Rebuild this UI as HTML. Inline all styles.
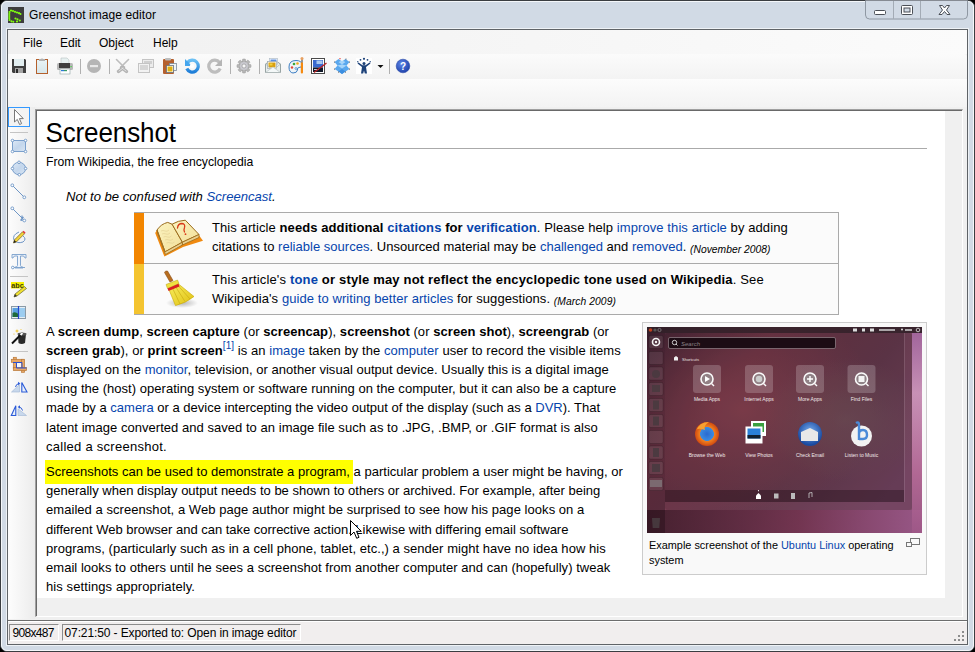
<!DOCTYPE html>
<html><head><meta charset="utf-8">
<style>
*{box-sizing:border-box;margin:0;padding:0}
html,body{width:975px;height:652px;overflow:hidden;background:#000;font-family:"Liberation Sans",sans-serif}
.abs{position:absolute}
#frame{position:absolute;left:0;top:0;width:975px;height:652px;background:#d1dae5;border:1px solid #3a3d41;border-radius:7px}
#frame:before{content:"";position:absolute;left:0;top:0;right:0;bottom:0;border:1px solid #f4f7fa;border-radius:6px}
#title{left:29px;top:8px;font-size:12px;letter-spacing:0.07px;color:#000;white-space:nowrap}
#client{left:7px;top:29px;width:961px;height:616px;border:1px solid #5f6367;background:#f0f0f0;box-shadow:0 0 0 1px #eef2f6}
#menubar{left:8px;top:30px;width:959px;height:24px;background:linear-gradient(90deg,#f0f0f0,#fbfbfb)}
.mi{position:absolute;top:6px;font-size:12px;color:#000}
#toolbar{left:8px;top:54px;width:959px;height:25px;background:linear-gradient(#fbfbfb,#f3f3f3);border-radius:0 3px 3px 0}
#toolbar2{left:8px;top:79px;width:959px;height:28px;background:linear-gradient(#fcfcfc,#f3f3f3)}
#lefttb{left:8px;top:107px;width:27px;height:512px;background:linear-gradient(90deg,#fdfdfd,#ececec)}
#canvas{left:35px;top:109px;width:928px;height:508px;background:#f0f0f0;border-top:2px solid;border-left:2px solid;border-color:#a0a0a0 #fff #fff #a0a0a0;border-right:1px solid #fff;border-bottom:1px solid #fff}
#canvas:before{content:"";position:absolute;left:-1px;top:-1px;right:0;bottom:0;border-top:1px solid #696969;border-left:1px solid #696969}
#img{left:37px;top:111px;width:908px;height:487px;background:#fff;overflow:hidden}
#status{left:8px;top:620px;width:959px;height:24px;background:#f1eeee;border-top:1px solid #6d6d6d;box-shadow:inset 0 1px 0 #fff}
.sp{position:absolute;top:3px;height:17px;border:1px solid;border-color:#8c8c8c #fff #fff #8c8c8c;font-size:12px;line-height:14px;padding-top:1px;white-space:nowrap}

.t{position:absolute;white-space:nowrap;color:#000}
.t a{color:#0645ad;text-decoration:none}
.t b a{color:#0645ad}
.body{font-size:13px;line-height:19.2px}
sup{font-size:10px;line-height:0;vertical-align:baseline;position:relative;top:-6px}
.sm{font-size:10.3px;position:relative;top:1.5px}
#ambox{left:97px;top:101px;width:705px;height:103px;background:#fbfbfb;border:1px solid #aaa;border-left:0}
#thumb{left:605px;top:211px;width:285px;height:253px;background:#f9f9f9;border:1px solid #ccc}
#ubuntu{left:4px;top:4px;width:275px;height:206px;background:#5a2a40;overflow:hidden}
</style></head><body>
<div id="frame"></div>
<div class="abs" id="title">Greenshot image editor</div>
<div class="abs" id="client"></div>
<div class="abs" id="menubar">
  <span class="mi" style="left:15px">File</span>
  <span class="mi" style="left:52px">Edit</span>
  <span class="mi" style="left:91px">Object</span>
  <span class="mi" style="left:145px">Help</span>
</div>
<div class="abs" id="toolbar"></div>
<div class="abs" id="toolbar2"></div>
<div class="abs" id="lefttb"></div>
<div class="abs" id="canvas"></div>
<div class="abs" id="img">
 <div class="t" style="left:8.4px;top:4px;font-size:26px;line-height:36px;letter-spacing:-0.1px;transform:scaleY(1.06);transform-origin:0 26.5px">Screenshot</div>
 <div class="abs" style="left:9px;top:37px;width:881px;height:1px;background:#aaa"></div>
 <div class="t" style="left:9px;top:43px;font-size:12.2px;line-height:17px">From Wikipedia, the free encyclopedia</div>
 <div class="t" style="left:29px;top:76px;font-size:13.1px;line-height:19px"><i>Not to be confused with <a>Screencast</a>.</i></div>
 <div class="abs" id="ambox">
<svg class="abs" style="left:-1px;top:-1px" width="80" height="104" viewBox="133 211 80 104">
 <defs>
  <radialGradient id="bshadow" cx=".5" cy=".5" r=".5"><stop offset="0" stop-color="#000" stop-opacity=".28"/><stop offset="1" stop-color="#000" stop-opacity="0"/></radialGradient>
  <linearGradient id="bpage" x1="0" y1="0" x2="1" y2="1"><stop offset="0" stop-color="#fbf3c0"/><stop offset="1" stop-color="#f3e09a"/></linearGradient>
  <linearGradient id="bbr" x1="0" y1="0" x2="1" y2="1"><stop offset="0" stop-color="#f8ee60"/><stop offset="1" stop-color="#e0c010"/></linearGradient>
 </defs>
 <!-- book shadow -->
 <path d="M155.2 232 L164.4 255.6 L183 246 L203 239.8 L198 233 L182 240 L165 250 L157 229 Z" fill="#f08a10"/>
 <!-- left page block -->
 <path d="M157 229 Q161 223 167.7 221.4 L172.1 223.2 L182.4 241.2 L165.1 250.8 Z" fill="url(#bpage)" stroke="#9a6a1a" stroke-width="1"/>
 <path d="M157 229 L158 233 L165.5 253.5 L182.4 244 L182.4 241.2 L165.1 250.8 Z" fill="#e8d090" stroke="#9a6a1a" stroke-width=".8"/>
 <!-- right page block -->
 <path d="M172.1 223.2 Q178 219.5 185.3 219.2 L199 233.5 L182.4 241.2 Z" fill="url(#bpage)" stroke="#9a6a1a" stroke-width="1"/>
 <path d="M182.4 241.2 L199 233.5 L199 236.5 L182.4 244 Z" fill="#e8d090" stroke="#9a6a1a" stroke-width=".8"/>
 <g stroke="#e0cc90" stroke-width=".6" fill="none"><path d="M161 230 q2 -1 4 0 t4 -1"/><path d="M162 233 q2 -1 4 0 t4 -1"/><path d="M163.5 236 q2 -1 4 0 t4 -1"/><path d="M165 239 q2 -1 4 0 t4 -1"/><path d="M166.5 242 q2 -1 4 0 t4 -1"/></g>
 <path d="M177.5 227 Q178 222.5 182 222.5 Q185.5 223 184.5 226.5 Q183.5 229 184.5 231" fill="none" stroke="#d83a1a" stroke-width="1.3" stroke-linecap="round"/>
 <circle cx="185.5" cy="233.2" r=".9" fill="#d83a1a"/>
 <!-- broom -->
 <ellipse cx="182" cy="302" rx="16" ry="5" fill="url(#bshadow)"/>
 <path d="M168.5 287.5 L178.5 283 L194 295.5 Q186 302 175.5 304.6 Z" fill="url(#bbr)" stroke="#c8a800" stroke-width=".6"/>
 <g stroke="#c8a810" stroke-width=".6"><line x1="172" y1="286" x2="180" y2="303"/><line x1="175" y1="284.8" x2="185" y2="300.5"/><line x1="177.5" y1="284" x2="190" y2="298"/></g>
 <path d="M164.5 271.5 Q165 269.5 167.5 270 L173 279.5 L170 281 Z" fill="#b86e20" stroke="#8a4a10" stroke-width=".6"/>
 <path d="M166 283.5 L177.5 279 L179 282.5 L167.5 287.5 Z" fill="#f0e040" stroke="#b8a010" stroke-width=".5"/>
 <path d="M167.5 287.5 L178.5 282.8 L179.5 285.5 L168.5 290 Z" fill="#d82020"/>
</svg>

  <div class="abs" style="left:0;top:0;width:10px;height:51px;background:#f28500"></div>
  <div class="abs" style="left:0;top:51px;width:10px;height:50px;background:#f4c430"></div>
  <div class="abs" style="left:10px;top:50px;width:694px;height:1px;background:#aaa"></div>
  <div class="t" style="left:78px;top:5px;font-size:13px;line-height:19.4px"><span class="ln" style="letter-spacing:0.086px">This article <b>needs additional <a>citations</a> for <a>verification</a></b>. Please help <a>improve this article</a> by adding</span><br><span class="ln" style="letter-spacing:0.022px">citations to <a>reliable sources</a>. Unsourced material may be <a>challenged</a> and <a>removed</a>. <i class="sm">(November 2008)</i></span></div>
  <div class="t" style="left:78px;top:57px;font-size:13px;line-height:19.4px"><span class="ln" style="letter-spacing:0.168px">This article's <b><a>tone</a> or style may not reflect the encyclopedic tone used on Wikipedia</b>. See</span><br><span class="ln" style="letter-spacing:0.077px">Wikipedia's <a>guide to writing better articles</a> for suggestions. <i class="sm">(March 2009)</i></span></div>
 </div>
 <div class="abs" style="left:8px;top:349px;width:308px;height:24px;background:#ffff00"></div>
 <div class="t body" style="left:9px;top:210.5px"><span class="ln" style="letter-spacing:0.057px">A <b>screen dump</b>, <b>screen capture</b> (or <b>screencap</b>), <b>screenshot</b> (or <b>screen shot</b>), <b>screengrab</b> (or</span><br><span class="ln" style="letter-spacing:0.066px"><b>screen grab</b>), or <b>print screen</b><sup><a>[1]</a></sup> is an <a>image</a> taken by the <a>computer</a> user to record the visible items</span><br><span class="ln" style="letter-spacing:0.020px">displayed on the <a>monitor</a>, television, or another visual output device. Usually this is a digital image</span><br><span class="ln" style="letter-spacing:0.031px">using the (host) operating system or software running on the computer, but it can also be a capture</span><br><span class="ln" style="letter-spacing:-0.000px">made by a <a>camera</a> or a device intercepting the video output of the display (such as a <a>DVR</a>). That</span><br><span class="ln" style="letter-spacing:0.037px">latent image converted and saved to an image file such as to .JPG, .BMP, or .GIF format is also</span><br><span class="ln" style="letter-spacing:0.263px">called a screenshot.</span></div>
 <div class="t body" style="left:9px;top:351px"><span class="ln" style="letter-spacing:0.010px">Screenshots can be used to demonstrate a program, a particular problem a user might be having, or</span><br><span class="ln" style="letter-spacing:-0.000px">generally when display output needs to be shown to others or archived. For example, after being</span><br><span class="ln" style="letter-spacing:0.051px">emailed a screenshot, a Web page author might be surprised to see how his page looks on a</span><br><span class="ln" style="letter-spacing:-0.016px">different Web browser and can take corrective action. Likewise with differing email software</span><br><span class="ln" style="letter-spacing:0.041px">programs, (particularly such as in a cell phone, tablet, etc.,) a sender might have no idea how his</span><br><span class="ln" style="letter-spacing:0.037px">email looks to others until he sees a screenshot from another computer and can (hopefully) tweak</span><br><span class="ln" style="letter-spacing:0.096px">his settings appropriately.</span></div>
 <div class="abs" id="thumb">
  <div class="abs" id="ubuntu"><svg width="275" height="206" viewBox="0 0 275 206" style="display:block">
 <defs>
  <linearGradient id="ubg" x1="0" y1="0" x2="1" y2="0.6">
   <stop offset="0" stop-color="#48283a"/><stop offset=".35" stop-color="#7a3c50"/><stop offset=".7" stop-color="#74445a"/><stop offset="1" stop-color="#845070"/>
  </linearGradient>
  <radialGradient id="ured" cx=".35" cy=".4" r=".5"><stop offset="0" stop-color="#a85262" stop-opacity=".75"/><stop offset="1" stop-color="#a05060" stop-opacity="0"/></radialGradient>
  <radialGradient id="ugray" cx=".72" cy=".45" r=".3"><stop offset="0" stop-color="#8a6a70" stop-opacity=".55"/><stop offset="1" stop-color="#8a6a70" stop-opacity="0"/></radialGradient>
  <linearGradient id="ubot" x1="0" y1="0" x2="1" y2="0"><stop offset="0" stop-color="#301420"/><stop offset=".55" stop-color="#6e2c48"/><stop offset="1" stop-color="#a05a90"/></linearGradient>
  <linearGradient id="upink" x1="0" y1="0" x2="0" y2="1"><stop offset="0" stop-color="#b070b0"/><stop offset=".3" stop-color="#e0a8d0"/><stop offset=".7" stop-color="#c070a0"/><stop offset="1" stop-color="#a05888"/></linearGradient>
  <radialGradient id="uff" cx=".5" cy=".5" r=".5"><stop offset="0" stop-color="#2a6ad0"/><stop offset=".55" stop-color="#3a8ae0"/><stop offset=".6" stop-color="#f08020"/><stop offset="1" stop-color="#d04a10"/></radialGradient>
  <radialGradient id="utb" cx=".5" cy=".4" r=".55"><stop offset="0" stop-color="#7ab0f0"/><stop offset="1" stop-color="#1a4aa0"/></radialGradient>
 </defs>
 <rect width="275" height="206" fill="url(#ubg)"/>
 <rect width="275" height="206" fill="url(#ured)"/>
 <rect width="275" height="206" fill="url(#ugray)"/>
 <rect x="0" y="183" width="275" height="23" fill="url(#ubot)" opacity=".7"/>
 <rect x="265" y="6" width="10" height="200" fill="url(#upink)" opacity=".75"/>
 <!-- top panel -->
 <rect x="0" y="0" width="275" height="6" fill="#2e1e26" opacity=".85"/>
 <circle cx="3.5" cy="3" r="1.8" fill="#c04020"/><circle cx="8" cy="3" r="1.6" fill="#555"/><circle cx="12.5" cy="3" r="1.6" fill="none" stroke="#999" stroke-width=".6"/>
 <g fill="#ddd"><rect x="206" y="1.5" width="4" height="3"/><rect x="215" y="1.5" width="3" height="3"/><rect x="223" y="1.5" width="4" height="3"/><rect x="232" y="2" width="16" height="2" opacity=".7"/><circle cx="255" cy="2.5" r="1"/><rect x="258" y="2" width="7" height="2" opacity=".7"/><circle cx="271" cy="3" r="1.8" fill="none" stroke="#ddd" stroke-width=".8"/></g>
 <!-- outer dash frame -->
 <rect x="18" y="6" width="247" height="177" rx="3" fill="#1a0810" opacity=".14"/>
 <rect x="18" y="6" width="239" height="169" fill="#000" opacity=".12"/>
 <line x1="257.5" y1="6" x2="257.5" y2="175" stroke="#fff" stroke-opacity=".12"/>
 <!-- launcher -->
 <rect x="0" y="6" width="18" height="200" fill="#1a0a12" opacity=".35"/>
 <g fill="#fff" fill-opacity=".09" stroke="#000" stroke-opacity=".3" stroke-width=".5">
  <rect x="2" y="8.5" width="14" height="13" rx="1.5"/><rect x="2" y="24.5" width="14" height="13" rx="1.5"/><rect x="2" y="40" width="14" height="13" rx="1.5"/><rect x="2" y="55.5" width="14" height="13" rx="1.5"/><rect x="2" y="71.5" width="14" height="13" rx="1.5"/><rect x="2" y="87.5" width="14" height="13" rx="1.5"/><rect x="2" y="103.5" width="14" height="13" rx="1.5"/><rect x="2" y="119" width="14" height="13" rx="1.5"/><rect x="2" y="134.5" width="14" height="13" rx="1.5"/><rect x="2" y="150.5" width="14" height="13" rx="1.5"/>
 </g>
 <circle cx="9" cy="15" r="3.5" fill="none" stroke="#f4f4f4" stroke-width="1.6"/><circle cx="9" cy="15" r="1.2" fill="#f4f4f4"/>
 <g fill="#4a3a40" opacity=".9"><circle cx="9" cy="47" r="4"/><rect x="5" y="58" width="8" height="7"/><rect x="6" y="73.5" width="6" height="9"/><rect x="6" y="89.5" width="6" height="9"/><rect x="6" y="121" width="6" height="9"/><rect x="5" y="137" width="8" height="8"/></g>
 <rect x="3" y="153" width="12" height="7" fill="#888" opacity=".6"/>
 <path d="M5 191 H13 L12.3 201 H5.7 Z" fill="#4a4044" opacity=".8"/>
 <!-- search -->
 <rect x="21.5" y="10.5" width="167" height="11" rx="1.5" fill="#1c0c14" stroke="#8a7880" stroke-width=".8"/>
 <circle cx="27.5" cy="15.5" r="2.2" fill="none" stroke="#ddd" stroke-width=".9"/><line x1="29" y1="17" x2="30.5" y2="18.5" stroke="#ddd" stroke-width=".9"/>
 <text x="34" y="18.5" font-family="Liberation Sans" font-style="italic" font-size="6" fill="#8a8084">Search</text>
 <text x="35" y="33.5" font-family="Liberation Sans" font-size="4" fill="#e8e0e0">Shortcuts</text>
 <path d="M27 33.5 V30.5 L29 29 L31 30.5 V33.5 Z" fill="#f0f0f0"/>
 <!-- tiles -->
 <g fill="#fff" fill-opacity=".2"><rect x="46" y="38" width="28" height="28" rx="3"/><rect x="98" y="38" width="28" height="28" rx="3"/><rect x="149" y="38" width="28" height="28" rx="3"/><rect x="200.5" y="38" width="28" height="28" rx="3"/></g>
 <g fill="#999" fill-opacity=".6" stroke="#fafafa" stroke-width="1.6"><circle cx="60" cy="52" r="6"/><circle cx="112" cy="52" r="6"/><circle cx="163" cy="52" r="6"/><circle cx="214.5" cy="52" r="6"/></g>
 <g stroke="#fafafa" stroke-width="1.4"><line x1="64.5" y1="56.5" x2="67" y2="59"/><line x1="116.5" y1="56.5" x2="119" y2="59"/><line x1="167.5" y1="56.5" x2="170" y2="59"/><line x1="219" y1="56.5" x2="221.5" y2="59"/></g>
 <path d="M58 49 L63 52 L58 55 Z" fill="#fff"/>
 <circle cx="112" cy="52" r="3.2" fill="#ccc"/>
 <path d="M160 52 H166 M163 49 V55" stroke="#fff" stroke-width="1.4"/>
 <rect x="211.5" y="49" width="6" height="6" fill="#f4f4f4"/>
 <g font-family="Liberation Sans" font-size="5" fill="#f0e8ea" text-anchor="middle"><text x="60" y="74">Media Apps</text><text x="112" y="74">Internet Apps</text><text x="163" y="74">More Apps</text><text x="214.5" y="74">Find Files</text>
 <text x="60" y="130">Browse the Web</text><text x="112" y="130">View Photos</text><text x="163" y="130">Check Email</text><text x="214.5" y="130">Listen to Music</text></g>
 <!-- row 2 icons -->
 <circle cx="60" cy="107" r="12" fill="url(#uff)"/>
 <path d="M49 104 Q52 95 62 95 Q56 99 58 103 Q50 100 49 104 Z" fill="#f8a030"/>
 <g><rect x="104" y="94" width="15" height="15" fill="#fff" transform="rotate(0)"/><rect x="106" y="96" width="11" height="9" fill="#3aa040"/><rect x="98.5" y="99.5" width="17" height="17" fill="#fff"/><rect x="100.5" y="101.5" width="13" height="10" fill="#2a80d8"/><rect x="100.5" y="108" width="13" height="3.5" fill="#102030"/></g>
 <circle cx="163" cy="107" r="12" fill="url(#utb)"/>
 <path d="M154 105 L163 101 L171 105 V114 H154 Z" fill="#e8e8e8"/>
 <circle cx="214.5" cy="109" r="10.5" fill="#f2f2f2"/>
 <path d="M209 96 Q212 94 212 98 V113 M212 107 Q212 103 216 103 Q220 103 220 108 Q220 112 216 112 H212" fill="none" stroke="#4a8ad8" stroke-width="2.4"/>
 <!-- lens bar -->
 <rect x="18" y="163" width="239" height="12" fill="#1a0a12" opacity=".35"/>
 <path d="M109 172 V168.5 L111.5 166 L114 168.5 V172 Z" fill="#fff"/><circle cx="111.5" cy="163.7" r=".6" fill="#fff"/>
 <g fill="#bbb"><rect x="127" y="166.5" width="4.5" height="5"/><rect x="144" y="166" width="4" height="6"/><path d="M162 166 V171 M162 166 L165 165.5 V170" stroke="#ccc" stroke-width=".8" fill="none"/></g>
</svg>
</div>
  <div class="t" style="left:6px;top:215px;font-size:10.9px;line-height:14.6px">Example screenshot of the <a>Ubuntu Linux</a> operating<br>system</div>
  <svg class="abs" style="left:262px;top:214px" width="16" height="12" viewBox="0 0 16 12"><rect x="5.5" y="1.5" width="9" height="6" fill="none" stroke="#777"/><rect x="1.5" y="5.5" width="5" height="4" fill="#f9f9f9" stroke="#777"/></svg>
 </div>
</div>
<svg class="abs" style="left:349px;top:519px" width="14" height="21" viewBox="0 0 14 21"><path d="M1.5 1.5 V16.5 L5 13 L7.7 19.3 L10 18.3 L7.5 12.3 H12.3 Z" fill="#fff" stroke="#000" stroke-width="1" stroke-linejoin="miter"/></svg>

<svg class="abs" style="left:0;top:0" width="975" height="110" viewBox="0 0 975 110">
 <defs>
  <linearGradient id="gBlueC" x1="0" y1="0" x2="0" y2="1"><stop offset="0" stop-color="#eaf4f6"/><stop offset="1" stop-color="#d6e6ea"/></linearGradient>
  <linearGradient id="gGray" x1="0" y1="0" x2="0" y2="1"><stop offset="0" stop-color="#c8c8c8"/><stop offset="1" stop-color="#a6a6a6"/></linearGradient>
  <radialGradient id="gHelp" cx="0.4" cy="0.35" r="0.7"><stop offset="0" stop-color="#5e86e8"/><stop offset="1" stop-color="#1c3fa8"/></radialGradient>
  <linearGradient id="gUndo" x1="0" y1="0" x2="0" y2="1"><stop offset="0" stop-color="#6cc0f4"/><stop offset="1" stop-color="#1e7ed8"/></linearGradient>
 </defs>
 <!-- title icon -->
 <rect x="8" y="7" width="16" height="16" fill="#3d3d3d"/>
 <g fill="#80ff10">
  <circle cx="11" cy="10.5" r="1.1"/><circle cx="13" cy="11" r="1.1"/><circle cx="15" cy="11.8" r="1.1"/><circle cx="17" cy="12.5" r="1.1"/><circle cx="19" cy="13.2" r="1.1"/><circle cx="20.5" cy="14" r="1"/>
  <circle cx="9.5" cy="12" r="1.1"/><circle cx="9.3" cy="14" r="1.1"/><circle cx="9.3" cy="16" r="1.1"/><circle cx="9.3" cy="18" r="1.1"/><circle cx="9.5" cy="20" r="1.1"/><circle cx="11.5" cy="21.3" r="1.1"/><circle cx="13.3" cy="21.8" r="1"/>
  <circle cx="15.5" cy="18.5" r="1.1"/><circle cx="17.5" cy="19.3" r="1.1"/><circle cx="19.8" cy="20.5" r="1.1"/><circle cx="17" cy="21.5" r="1.1"/>
 </g>
 <!-- caption buttons -->
 <path d="M865.5 0.5 V15 a4 4 0 0 0 4 4 H963.5 a4 4 0 0 0 4 -4 V0.5" fill="#d1dae5" stroke="#8f98a3"/>
 <line x1="893.5" y1="1" x2="893.5" y2="19" stroke="#a3abb5"/>
 <line x1="920.5" y1="1" x2="920.5" y2="19" stroke="#a3abb5"/>
 <rect x="874.5" y="10.5" width="11" height="4" rx="1" fill="#fff" stroke="#4a4f56"/>
 <rect x="901.5" y="5.5" width="11" height="9" rx="1" fill="#fff" stroke="#4a4f56"/>
 <rect x="904" y="8" width="6" height="4" fill="#d1dae5" stroke="#4a4f56" stroke-width="1"/>
 <path d="M939.5 5.5 L942.5 5.5 L944.5 8 L946.5 5.5 L949.5 5.5 L946.5 10 L950 14.5 L947 14.5 L944.5 11.5 L942 14.5 L939 14.5 L942.5 10 Z" fill="#fff" stroke="#4a4f56" stroke-linejoin="round"/>
 <!-- save -->
 <path d="M12 59 H25 L26 60 V73 H13 L12 72 Z" fill="#3f3f3f"/>
 <rect x="14" y="59" width="10" height="7" fill="#e2eef0"/>
 <rect x="15" y="68" width="8" height="5" fill="#a5a5a5"/>
 <rect x="16" y="69" width="2" height="4" fill="#2a2a2a"/>
 <!-- clipboard -->
 <rect x="36.5" y="59.5" width="11" height="14" fill="url(#gBlueC)" stroke="#b4602c"/>
 <path d="M39 60 Q42 57 45 60 Z" fill="#a9a9a9"/>
 <rect x="39" y="59" width="6" height="2" fill="#b3b3b3"/>
 <!-- printer -->
 <path d="M61 58 H67 L69 60 V64 H61 Z" fill="#e6f0f0" stroke="#b9c4c4" stroke-width=".6"/>
 <rect x="57" y="63" width="16" height="7" rx="1.5" fill="#b8b8b8"/>
 <rect x="59" y="63" width="11" height="5" fill="#3e3e3e"/>
 <rect x="70.5" y="66" width="1.2" height="1.2" fill="#3fd33f"/>
 <rect x="60" y="69" width="10" height="5" fill="#fff" stroke="#8aa0a0" stroke-width=".6"/>
 <rect x="61" y="70" width="3" height="1.2" fill="#2d7ad6"/><rect x="64" y="70" width="3" height="1.2" fill="#3a9a6a"/>
 <!-- separators -->
 <g stroke="#b0b0b0"><line x1="80.5" y1="59" x2="80.5" y2="74"/><line x1="109.5" y1="59" x2="109.5" y2="74"/><line x1="230.5" y1="59" x2="230.5" y2="74"/><line x1="259.5" y1="59" x2="259.5" y2="74"/><line x1="389.5" y1="59" x2="389.5" y2="74"/></g>
 <!-- delete -->
 <circle cx="94" cy="66" r="7" fill="#b5b5b5"/>
 <rect x="90" y="65" width="8" height="2.2" fill="#e8e8e8"/>
 <!-- cut -->
 <g stroke="#bdbdbd" stroke-width="1.6" stroke-linecap="round"><line x1="116.5" y1="59.5" x2="123" y2="66"/><line x1="128.5" y1="59.5" x2="122" y2="66"/></g>
 <g stroke="#b3b3b3" stroke-width="3.4" stroke-linecap="round"><line x1="121.5" y1="67.5" x2="126.5" y2="71.5"/><line x1="123.5" y1="67.5" x2="118.5" y2="71.5"/></g>
 <g stroke="#e6e6e6" stroke-width=".9" stroke-linecap="round"><line x1="122" y1="68" x2="126" y2="71"/><line x1="123" y1="68" x2="119" y2="71"/></g>
 <!-- copy -->
 <rect x="142.5" y="59.5" width="11" height="8" fill="#ececec" stroke="#c4c4c4"/>
 <rect x="144" y="61" width="8" height="3" fill="#d0d0d0"/>
 <rect x="138.5" y="63.5" width="11" height="9" fill="#f2f2f2" stroke="#c4c4c4"/>
 <rect x="140" y="65" width="8" height="5" fill="#d6d6d6"/>
 <!-- paste -->
 <rect x="163" y="59" width="11" height="15" rx="1" fill="#b5602e"/>
 <rect x="165" y="58" width="6" height="2.5" rx="1" fill="#bdbdbd"/>
 <rect x="169.5" y="63.5" width="7" height="7" fill="#eef4f8" stroke="#7b8a99" stroke-width=".8"/>
 <rect x="166.5" y="65.5" width="7" height="7" fill="#fff" stroke="#66717c" stroke-width=".8"/>
 <rect x="167.5" y="66.5" width="5" height="5" fill="#e0b010"/>
 <!-- undo -->
 <path d="M187.5 62.5 A6 6 0 1 1 186.8 68.5" fill="none" stroke="url(#gUndo)" stroke-width="3.2"/>
 <path d="M185 59 L185 66 L192 66 Z" fill="#45a6ee"/>
 <circle cx="192" cy="66" r="2.2" fill="#fff"/>
 <!-- redo -->
 <path d="M219.5 62.5 A6 6 0 1 0 220.2 68.5" fill="none" stroke="#bdbdbd" stroke-width="3.2"/>
 <path d="M222 59 L222 66 L215 66 Z" fill="#b5b5b5"/>
 <!-- gear -->
 <g transform="translate(244,66)">
  <g fill="#b5b5b5" stroke="#9a9a9a" stroke-width=".5">
   <circle r="4.8"/>
   <rect x="-1.6" y="-7" width="3.2" height="14" rx=".8"/>
   <rect x="-1.6" y="-7" width="3.2" height="14" rx=".8" transform="rotate(45)"/>
   <rect x="-1.6" y="-7" width="3.2" height="14" rx=".8" transform="rotate(90)"/>
   <rect x="-1.6" y="-7" width="3.2" height="14" rx=".8" transform="rotate(135)"/>
  </g>
  <circle r="4" fill="#c9c9cf"/>
  <circle r="2" fill="#f6f6f6" stroke="#8e8e8e" stroke-width=".6"/>
 </g>
 <!-- email -->
 <path d="M265.5 64 L273 59 L280.5 64 V72.5 H265.5 Z" fill="#e8eeee" stroke="#98a4a4"/>
 <rect x="269.5" y="58.5" width="8" height="6" fill="#fff" stroke="#b0bcc8" stroke-width=".7"/>
 <rect x="270.5" y="59.5" width="6" height="3" fill="#5a8ee0"/>
 <rect x="267.5" y="61.5" width="9" height="7" fill="#fff" stroke="#a0aab0" stroke-width=".7"/>
 <rect x="268.5" y="62.5" width="7" height="5" fill="#d8a010"/>
 <rect x="269.5" y="63.5" width="3" height="2" fill="#f0d040"/>
 <path d="M265.5 64 L271 68.5 M280.5 64 L275 68.5" stroke="#b0bcbc" stroke-width=".8"/>
 <path d="M266 72.2 L273 67 L280 72.2" fill="#f4f8f8" stroke="#c0caca" stroke-width=".8"/>
 <!-- paint -->
 <path d="M289 67 Q289 60.5 296 60.5 Q302 60.5 302 65 Q302 67.5 299 67.5 Q297 67.5 297.5 70 Q297 73 293 73 Q289 72.5 289 67 Z" fill="#eef4f8" stroke="#3d7fc4" stroke-width="1"/>
 <circle cx="292" cy="67.5" r="1.2" fill="#e0443a"/>
 <circle cx="294" cy="64" r="1.3" fill="#3aa63a"/>
 <circle cx="297.5" cy="63.5" r="1.3" fill="#f3a81c"/>
 <circle cx="296" cy="68.5" r="1" fill="none" stroke="#3d7fc4" stroke-width=".7"/>
 <rect x="300.8" y="62" width="2.2" height="11.5" rx="1" fill="#f58a10"/>
 <rect x="301.2" y="58.5" width="1.6" height="4" fill="#7e7e7e"/>
 <circle cx="302" cy="58.6" r="1.5" fill="#e8a060"/>
 <!-- image editor -->
 <rect x="311.5" y="58.5" width="13" height="15" fill="#fff" stroke="#4a4a4a"/>
 <rect x="313" y="60" width="10" height="7.5" fill="#3a6ad0"/>
 <rect x="316.5" y="60.5" width="6" height="3.5" fill="#a8c8f0"/>
 <rect x="313" y="67.5" width="10" height="4.5" fill="#101828"/>
 <rect x="314" y="69" width="5" height="1" fill="#c0c8d8"/>
 <line x1="314" y1="72.5" x2="326.5" y2="63" stroke="#b82020" stroke-width="1.3"/>
 <!-- dropbox -->
 <path d="M334.5 62 L338.5 59 L342 61.5 L345.5 59 L349.5 62 L346.5 65.5 L349.5 69 L345.5 71.5 L342 74 L338.5 71.5 L334.5 69 L337.5 65.5 Z" fill="#5aa8ee"/>
 <path d="M338.5 62 L342 64.5 L345.5 62 L342 60.5 Z M337.5 65.5 L342 68.5 L346.5 65.5 L342 64.5 Z" fill="#a8d6fa"/>
 <path d="M338.5 71.5 L342 69 L345.5 71.5 L342 74 Z" fill="#3c8ee0"/>
 <g fill="#333"><circle cx="334.5" cy="62" r=".5"/><circle cx="349.5" cy="62" r=".5"/><circle cx="334.5" cy="69" r=".5"/><circle cx="349.5" cy="69" r=".5"/><circle cx="338.5" cy="72" r=".5"/><circle cx="345.5" cy="72" r=".5"/><circle cx="346" cy="59" r=".5"/></g>
 <circle cx="340" cy="58.7" r=".6" fill="#e01010"/>
 <!-- imgur -->
 <rect x="356" y="58" width="16" height="16" fill="#fff"/>
 <g fill="#1d4279">
  <circle cx="364" cy="58.8" r="1.1"/><circle cx="360.5" cy="59.8" r=".9"/><circle cx="367.5" cy="59.8" r=".9"/><circle cx="357.8" cy="61.8" r=".7"/><circle cx="370.2" cy="61.8" r=".7"/>
  <circle cx="364" cy="63.5" r="1.5"/>
  <path d="M357.5 63.5 L362 67 L361 73.5 H363.2 L364 70.5 L364.8 73.5 H367 L366 67 L370.5 63.5 L369.5 62.5 L365.5 65.3 H362.5 L358.5 62.5 Z"/>
 </g>
 <path d="M377.5 65 H383.5 L380.5 68 Z" fill="#111"/>
 <!-- help -->
 <circle cx="403" cy="66" r="6.8" fill="url(#gHelp)" stroke="#2a49a8" stroke-width=".6"/>
 <text x="403" y="70" font-family="Liberation Sans" font-weight="bold" font-size="10" fill="#fff" text-anchor="middle">?</text>
</svg>

<svg class="abs" style="left:0;top:100px" width="36" height="330" viewBox="0 100 36 330">
 <defs>
  <linearGradient id="gShape" x1="0" y1="0" x2="1" y2="1"><stop offset="0" stop-color="#dde9f6"/><stop offset=".5" stop-color="#c3d6ec"/><stop offset="1" stop-color="#d8e5f3"/></linearGradient>
 </defs>
 <!-- pointer selected -->
 <rect x="8.5" y="107.5" width="21" height="19" fill="#f3f3f3" stroke="#3399ff"/>
 <path d="M14.5 109.5 V122 L17.3 119.4 L19.6 124.5 L21.6 123.6 L19.4 118.6 L23.3 118.6 Z" fill="#fff" stroke="#777" stroke-width="1" stroke-linejoin="round"/>
 <g stroke="#c4c4c4"><line x1="10" y1="132.5" x2="28" y2="132.5"/><line x1="10" y1="276.5" x2="28" y2="276.5"/><line x1="10" y1="351.5" x2="28" y2="351.5"/></g>
 <!-- rect -->
 <rect x="12.5" y="140.5" width="13" height="11" fill="url(#gShape)" stroke="#7ba0cc"/>
 <g fill="#fff" stroke="#6e96c6" stroke-width=".9"><circle cx="12.5" cy="140.5" r="1.3"/><circle cx="25.5" cy="140.5" r="1.3"/><circle cx="12.5" cy="151.5" r="1.3"/><circle cx="25.5" cy="151.5" r="1.3"/></g>
 <!-- ellipse -->
 <ellipse cx="19" cy="168.5" rx="6.6" ry="6.2" fill="url(#gShape)" stroke="#7ba0cc"/>
 <g fill="#fff" stroke="#6e96c6" stroke-width=".9"><circle cx="19" cy="162.3" r="1.3"/><circle cx="12.4" cy="168.5" r="1.3"/><circle cx="25.6" cy="168.5" r="1.3"/><circle cx="19.3" cy="174.7" r="1.3"/></g>
 <!-- line -->
 <line x1="12.5" y1="185.5" x2="24" y2="197" stroke="#6e96c6" stroke-width="1"/>
 <g fill="#fff" stroke="#6e96c6" stroke-width=".9"><circle cx="12.3" cy="185.3" r="1.4"/><circle cx="24.3" cy="197.3" r="1.4"/></g>
 <!-- arrow -->
 <line x1="12.5" y1="208.5" x2="24" y2="220" stroke="#6e96c6" stroke-width="1"/>
 <path d="M20.5 220.5 L23.5 217 M22 215.5 L22 221" stroke="#6e96c6" stroke-width="1.2"/>
 <g fill="#fff" stroke="#6e96c6" stroke-width=".9"><circle cx="12.3" cy="208.3" r="1.4"/><circle cx="24.3" cy="220.5" r="1.4"/></g>
 <!-- freehand -->
 <path d="M19 232 Q12 235 14 240 Q17 244 23 242 Q27 239 23 236" fill="none" stroke="#6e96c6" stroke-width="1"/>
 <path d="M13.5 243 L14.3 240 L22.5 231.8 L24.5 233.8 L16.3 242 Z" fill="#f2d33a" stroke="#5d4a10" stroke-width=".6"/>
 <path d="M22.5 231.8 L23.6 230.7 L25.6 232.7 L24.5 233.8 Z" fill="#e23a3a"/>
 <path d="M13.5 243 L14.3 240 L16.3 242 Z" fill="#222"/>
 <!-- text T -->
 <path d="M12 254.5 H26 V258 H25 Q24.5 256 23 256 H20.5 V265.5 Q20.5 267 23 267.2 V268 H15 V267.2 Q17.5 267 17.5 265.5 V256 H15 Q13.5 256 13 258 H12 Z" fill="#eef3fa" stroke="#7ba0cc" stroke-width=".9"/>
 <circle cx="12.8" cy="267.5" r="1.3" fill="#fff" stroke="#6e96c6" stroke-width=".9"/>
 <line x1="14" y1="267.5" x2="25" y2="267.5" stroke="#7ba0cc" stroke-width=".9"/>
 <!-- highlight abc -->
 <rect x="11" y="282" width="13" height="6.5" fill="#f6f000"/>
 <text x="11.3" y="288" font-family="Liberation Sans" font-weight="bold" font-size="7.2" fill="#3b3b12">abc</text>
 <path d="M14 297 L15 294 L24.5 286.5 L26.5 288.5 L17 296 Z" fill="#f0e030" stroke="#505020" stroke-width=".6"/>
 <path d="M14 297 L15 294 L17 296 Z" fill="#333"/>
 <!-- obfuscate -->
 <rect x="11.5" y="306.5" width="14" height="12" fill="#e6eef4" stroke="#8a9aa6"/>
 <rect x="12.5" y="308" width="12" height="9" fill="#5aa0e0"/>
 <path d="M12.5 313 Q15 311 18.5 314 V317 H12.5 Z" fill="#1e6a3a"/>
 <rect x="18.5" y="308" width="6" height="9" fill="#9ccdf0"/>
 <line x1="18.5" y1="306" x2="18.5" y2="319" stroke="#2244cc" stroke-width="1.2"/>
 <!-- magic wand -->
 <path d="M18 334 H26 L25 343 Q21.5 345 18.5 343 Z" fill="#2a2a2a"/>
 <ellipse cx="22" cy="334" rx="4.5" ry="1.5" fill="#555"/>
 <line x1="12" y1="343.5" x2="22.5" y2="333" stroke="#111" stroke-width="2"/>
 <line x1="20.5" y1="335" x2="22.5" y2="333" stroke="#fff" stroke-width="2"/>
 <g fill="#f0c020"><path d="M17 329 L17.6 330.6 L19.2 331 L17.6 331.4 L17 333 L16.4 331.4 L14.8 331 L16.4 330.6 Z"/><circle cx="14" cy="334" r=".6"/><circle cx="21" cy="329.5" r=".5"/></g>
 <!-- crop -->
 <g fill="#e8a868" stroke="#b87838" stroke-width=".7">
  <rect x="13.3" y="357.3" width="3" height="11"/>
  <rect x="11.3" y="359.3" width="12" height="3"/>
  <rect x="21.6" y="359.3" width="3" height="13"/>
  <rect x="13.3" y="367.6" width="13.3" height="3"/>
 </g>
 <path d="M16.5 362.5 H22 V368 H16.5 Z M22 368 H26.5 M13 362.5 H16.5" fill="none" stroke="#2a50d0" stroke-width="1"/>
 <!-- rotate cw -->
 <path d="M11.5 392 L19.5 384.5 V392 Z" fill="#c8d8ec" stroke="#a8bcd8" stroke-width=".7"/>
 <path d="M21.8 382.5 L27 392 H21.8 Z" fill="#e8f0fa" stroke="#2b5bd8" stroke-width="1.1"/>
 <path d="M15.5 387 Q16 384 19 383.5" fill="none" stroke="#2b5bd8" stroke-width="1"/>
 <path d="M18 381.8 L20.3 383.5 L18 385.2 Z" fill="#2b5bd8"/>
 <!-- rotate ccw -->
 <path d="M15.8 405.8 L11.3 415.5 H15.8 Z" fill="#e8f0fa" stroke="#2b5bd8" stroke-width="1.1"/>
 <path d="M18 408.8 L26.5 415.5 H18 Z" fill="#c8d8ec" stroke="#a8bcd8" stroke-width=".7"/>
 <path d="M22.5 410.5 Q22 407.5 19 407" fill="none" stroke="#2b5bd8" stroke-width="1"/>
 <path d="M20 405.3 L17.7 407 L20 408.7 Z" fill="#2b5bd8"/>
</svg>

<div class="abs" id="status">
  <div class="sp" style="left:1px;width:50px;padding-left:2.5px;letter-spacing:-0.7px">908x487</div>
  <div class="sp" style="left:54px;width:239px;padding-left:1.5px;letter-spacing:-0.11px">07:21:50 - Exported to: Open in image editor</div>
</div>
<svg class="abs" style="left:950px;top:628px" width="16" height="15" viewBox="950 628 16 15"><g fill="#8c8c8c"><rect x="954" y="639" width="2" height="2"/><rect x="958" y="639" width="2" height="2"/><rect x="962" y="639" width="2" height="2"/><rect x="958" y="635" width="2" height="2"/><rect x="962" y="635" width="2" height="2"/><rect x="962" y="631" width="2" height="2"/></g></svg>
</body></html>
